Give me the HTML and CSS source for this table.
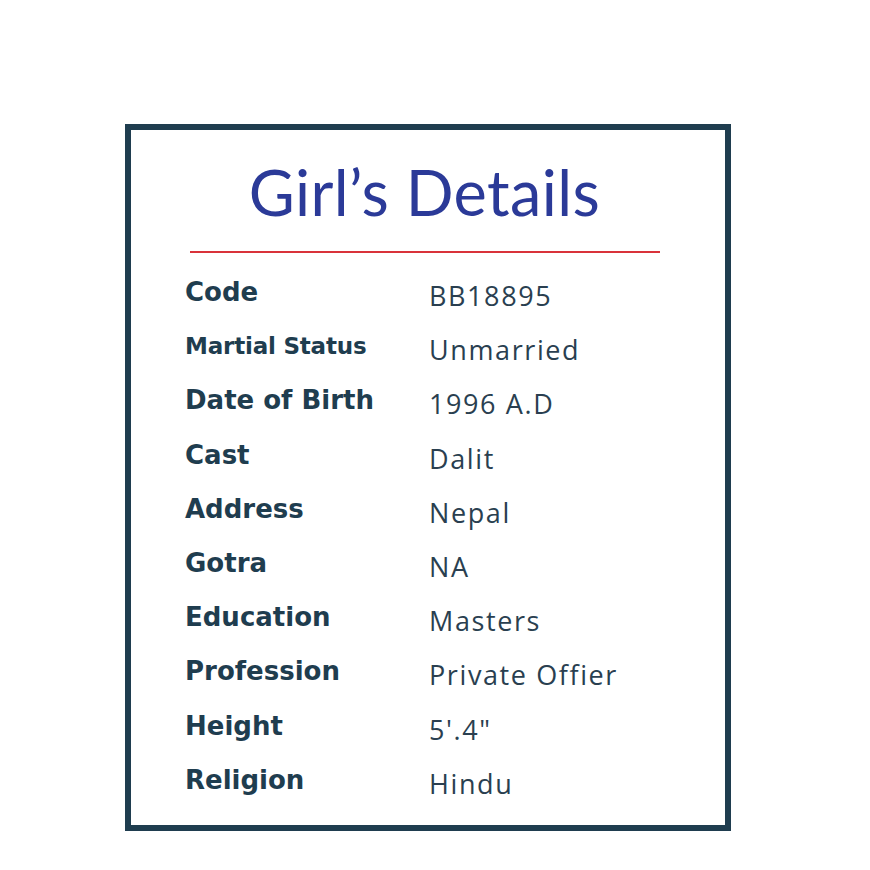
FILE: index.html
```html
<!DOCTYPE html>
<html>
<head>
<meta charset="utf-8">
<link rel="stylesheet" href="styles.css">
</head>
<body>
<div class="card">
  <h1 class="title">Girl’s Details</h1>
  <div class="rule"></div>
  <div class="details">
    <div class="label">Code</div><div class="value">BB18895</div>
    <div class="label small">Martial Status</div><div class="value">Unmarried</div>
    <div class="label">Date of Birth</div><div class="value">1996 A.D</div>
    <div class="label">Cast</div><div class="value">Dalit</div>
    <div class="label">Address</div><div class="value">Nepal</div>
    <div class="label">Gotra</div><div class="value">NA</div>
    <div class="label">Education</div><div class="value">Masters</div>
    <div class="label">Profession</div><div class="value">Private Offier</div>
    <div class="label">Height</div><div class="value">5'.4"</div>
    <div class="label">Religion</div><div class="value">Hindu</div>
  </div>
</div>
</body>
</html>
```

FILE: styles.css
```css
html, body {
  margin: 0;
  padding: 0;
  background: #ffffff;
}
.card {
  box-sizing: border-box;
  margin: 124px 0 0 125px;
  width: 606px;
  height: 707px;
  border: 6px solid #1f3d4f;
  background: #fff;
}
.title {
  margin: 30px 0 0 0;
  padding-right: 7px;
  font-family: "Lato", "Open Sans", sans-serif;
  font-weight: 400;
  font-size: 63px;
  line-height: 63px;
  letter-spacing: 0.4px;
  color: #2b3a98;
  text-align: center;
}
.rule {
  margin: 28px 0 0 59px;
  width: 470px;
  height: 2px;
  background: #d9333a;
}
.details {
  margin: 12px 0 0 54px;
  display: grid;
  grid-template-columns: 244px auto;
  grid-auto-rows: 54.2px;
}
.label {
  font-family: "DejaVu Sans", "Open Sans", sans-serif;
  font-weight: 700;
  font-size: 26px;
  line-height: 54.2px;
  color: #1f3d4f;
}
.label.small {
  font-size: 23px;
  letter-spacing: -0.2px;
}
.value {
  font-family: "Open Sans", "Lato", sans-serif;
  font-weight: 400;
  font-size: 27px;
  line-height: 54.2px;
  letter-spacing: 1.6px;
  padding-top: 4px;
  color: #2a3f50;
}
```
